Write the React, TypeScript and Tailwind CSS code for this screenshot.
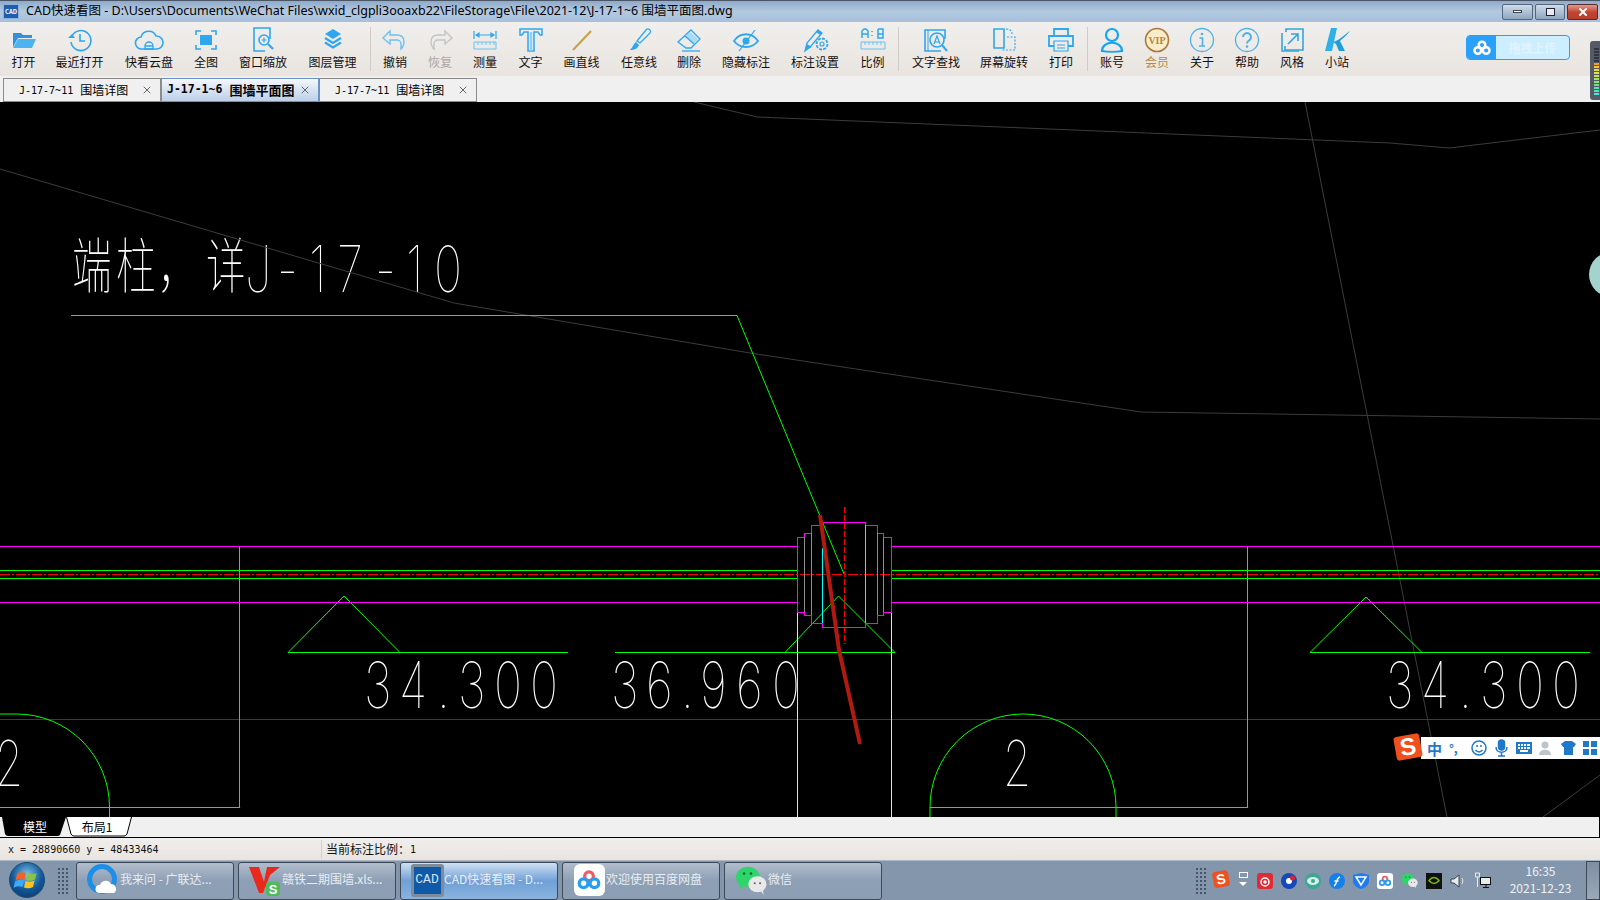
import type { ReactNode } from 'react';
import { X } from 'lucide-react';

const B = '#2ea7ee';
const UI = 'font-["Noto_Sans_CJK_SC","Noto_Sans",sans-serif]';

const Ico = ({ children }: { children: ReactNode }) => (
  <svg width="30" height="30" viewBox="0 0 30 30" fill="none" stroke={B} strokeWidth="1.6">{children}</svg>
);

const icons: Record<string, ReactNode> = {
  open: <Ico><path d="M4 8h8l2 2h9v3H9l-5 9z" fill="#2f93dd" stroke="none" /><path d="M9 14h18l-4 9H4z" fill="#4db3f0" stroke="none" /></Ico>,
  recent: <Ico><path d="M7 11a10 10 0 1 1 -1 6" /><path d="M3 13l4 -4 3 4z" fill={B} stroke="none" /><path d="M15 9v7h5" /></Ico>,
  cloud: <Ico><path d="M8 24a6 6 0 0 1 -1 -12 8 8 0 0 1 15 -1 6.500 6.500 0 0 1 1 13z" /><path d="M11 24v-3a4 4 0 0 1 8 0v3zM11 21h8" strokeWidth="1.300" /></Ico>,
  full: <Ico><path d="M5 10V6h5M20 6h5v4M25 20v4h-5M10 24H5v-4" /><rect x="9" y="10" width="12" height="10" fill={B} stroke="none" /></Ico>,
  wzoom: <Ico><path d="M17 26H6V3h16v11" /><circle cx="16" cy="15" r="5" /><path d="M13.500 15h5M16 12.500v5" strokeWidth="1.200" /><path d="M20 19l5 5" strokeWidth="2.200" /></Ico>,
  layers: <Ico><path d="M15 4l8 5 -8 5 -8 -5z" fill={B} stroke="none" /><path d="M7 13l8 5 8 -5M7 17.500l8 5 8 -5" strokeWidth="2.200" /></Ico>,
  undo: <Ico><path d="M10 6l-7 7 7 6v-4h7a4 4 0 0 1 4 4v5c4 -4 5 -14 -4 -14h-7z" strokeWidth="1.400" stroke="#6cc0f2" /></Ico>,
  redo: <Ico><path d="M20 6l7 7 -7 6v-4h-7a4 4 0 0 0 -4 4v5c-4 -4 -5 -14 4 -14h7z" strokeWidth="1.400" stroke="#c4c4c4" /></Ico>,
  measure: <Ico><path d="M4 6v8M26 6v8M6 10h18M6 10l3 -2v4zM24 10l-3 -2v4z" strokeWidth="1.200" /><path d="M4 17h22v7H4zM8 17v3M12 17v3M16 17v3M20 17v3M24 17v3" strokeWidth="1" stroke="#6cc0f2" /></Ico>,
  text: <Ico><path d="M4 4h22v6h-2l-2 -3h-4v19h-6V7H8l-2 3H4z" strokeWidth="1.500" /><path d="M15 7v19" strokeWidth="2.500" stroke="#8fd0f5" /></Ico>,
  line: <Ico><path d="M6 25L24 6" stroke="#c9a24f" strokeWidth="2.200" /></Ico>,
  brush: <Ico><path d="M13 16l9 -11a2.500 2.500 0 0 1 4 3l-10 10z" strokeWidth="1.300" /><path d="M12 17c-2 1 -3 5 -6 8 5 0 8 -2 9 -5z" fill={B} stroke="none" /></Ico>,
  eraser: <Ico><path d="M4 17L17 5l9 9 -9 9h-5z" strokeWidth="1.300" /><path d="M16 7l8 7 -4 5 -9 -8z" fill="#a9dbf7" stroke="none" /><path d="M11 11l9 8" strokeWidth="1.300" /><path d="M8 26h18" strokeWidth="1.300" /></Ico>,
  eye: <Ico><path d="M3 16c6 -9 18 -9 24 0 -6 8 -18 8 -24 0z" strokeWidth="1.800" /><circle cx="15" cy="16" r="3.500" fill={B} stroke="none" /><path d="M8 26L24 5" strokeWidth="1.200" /></Ico>,
  pen: <Ico><path d="M5 26l2 -8L18 5l4 3 -11 13z" fill="none" strokeWidth="1.300" /><path d="M18 5l4 3 -2 2 -4 -3z" fill={B} stroke="none" /><path d="M5 26l2 -7 5 3z" fill={B} stroke="none" /><circle cx="22" cy="19" r="5.500" strokeDasharray="3 1.200" strokeWidth="1.800" /><circle cx="22" cy="19" r="2" strokeWidth="1.200" /></Ico>,
  ratio: <Ico><path d="M4 13V6l2 -2h2l2 2v7M4 9h6M20 4v9h5V9h-5M20 4h5v5" strokeWidth="1.500" /><path d="M14 6v1M14 10v1" /><path d="M3 17h24v7H3zM7 17v3M11 17v3M15 17v3M19 17v3M23 17v3" strokeWidth="1" stroke="#6cc0f2" /></Ico>,
  find: <Ico><path d="M20 26H4V5h20v9" /><path d="M7 5v21" strokeWidth="1" /><circle cx="16" cy="15" r="7" /><path d="M13 19l3 -8 3 8M14 17h4" strokeWidth="1.200" /><path d="M21 20l5 6" strokeWidth="2" /></Ico>,
  rotate: <Ico><path d="M5 4h10v19H5z" /><path d="M18 12h8v13H12" strokeDasharray="2 1.500" strokeWidth="1.200" /><path d="M17 4c4 0 6 2 6 5" strokeDasharray="2 1.500" strokeWidth="1.200" /></Ico>,
  print: <Ico><path d="M8 11V4h14v7M8 21H3V11h24v10h-5" strokeWidth="1.800" /><path d="M8 16h14v10H8zM11 20h8M11 23h8" strokeWidth="1.200" /></Ico>,
  user: <Ico><circle cx="15" cy="10" r="6" stroke="#14a5f2" strokeWidth="2.200" /><path d="M5 26c0 -11 20 -11 20 0 -5 1 -15 1 -20 0z" stroke="#14a5f2" strokeWidth="2.200" /></Ico>,
  vip: (
    <svg width="30" height="30" viewBox="0 0 30 30">
      <circle cx="15" cy="15" r="11.500" fill="#f8eccb" stroke="#a9783a" strokeWidth="1.600" />
      <text x="15" y="18.500" textAnchor="middle" fontSize="10" fontWeight="700" fill="#b7872e" fontFamily="Liberation Serif, serif">VIP</text>
    </svg>
  ),
  info: (
    <svg width="30" height="30" viewBox="0 0 30 30" fill="none" stroke="#4fb2e6" strokeWidth="1.300">
      <circle cx="15" cy="15" r="11.500" />
      <circle cx="15" cy="9" r="1.300" fill="#4fb2e6" stroke="none" />
      <path d="M12.500 13h3v8M12 21h6" strokeWidth="1.600" />
    </svg>
  ),
  help: (
    <svg width="30" height="30" viewBox="0 0 30 30" fill="none" stroke="#4fb2e6" strokeWidth="1.300">
      <circle cx="15" cy="15" r="11.500" />
      <path d="M11 12a4 4 0 1 1 6 3.500c-1.500 1 -2 1.500 -2 3" strokeWidth="2" />
      <circle cx="15" cy="21.500" r="1.300" fill="#4fb2e6" stroke="none" />
    </svg>
  ),
  style: <Ico><path d="M9 7V4h17v21H8v-4" stroke="#36a5dc" /><path d="M5 8v18h17" stroke="#36a5dc" /><path d="M11 19L21 9M14 9h7v7" stroke="#36a5dc" /></Ico>,
  site: (
    <svg width="30" height="30" viewBox="0 0 30 30">
      <path d="M9 3h6L10 26H3z" fill="#2fb0e8" />
      <path d="M11 17c5 -1 10 -6 17 -11 -4 5 -8 8 -10 10l5 10h-6l-3 -7z" fill="#1e9fd8" />
    </svg>
  ),
};

const tools = [
  { label: '打开', icon: 'open', w: 'w-[45px] ml-px' },
  { label: '最近打开', icon: 'recent', w: 'w-[67px]' },
  { label: '快看云盘', icon: 'cloud', w: 'w-[72px]' },
  { label: '全图', icon: 'full', w: 'w-[42px]' },
  { label: '窗口缩放', icon: 'wzoom', w: 'w-[72px]' },
  { label: '图层管理', icon: 'layers', w: 'w-[67px]' },
  { sep: true, w: 'ml-[4px]' },
  { label: '撤销', icon: 'undo', w: 'w-[48px]' },
  { label: '恢复', icon: 'redo', w: 'w-[42px]', cls: 'text-[#a8a8a8]' },
  { label: '测量', icon: 'measure', w: 'w-[48px]' },
  { label: '文字', icon: 'text', w: 'w-[43px]' },
  { label: '画直线', icon: 'line', w: 'w-[59px]' },
  { label: '任意线', icon: 'brush', w: 'w-[56px]' },
  { label: '删除', icon: 'eraser', w: 'w-[44px]' },
  { label: '隐藏标注', icon: 'eye', w: 'w-[70px]' },
  { label: '标注设置', icon: 'pen', w: 'w-[68px]' },
  { label: '比例', icon: 'ratio', w: 'w-[47px]' },
  { sep: true, w: 'ml-[2px]' },
  { label: '文字查找', icon: 'find', w: 'w-[74px]' },
  { label: '屏幕旋转', icon: 'rotate', w: 'w-[62px]' },
  { label: '打印', icon: 'print', w: 'w-[52px]' },
  { sep: true, w: '' },
  { label: '账号', icon: 'user', w: 'w-[48px]' },
  { label: '会员', icon: 'vip', w: 'w-[42px]', cls: 'text-[#c08a35]' },
  { label: '关于', icon: 'info', w: 'w-[48px]' },
  { label: '帮助', icon: 'help', w: 'w-[42px]' },
  { label: '风格', icon: 'style', w: 'w-[48px]' },
  { label: '小站', icon: 'site', w: 'w-[42px]' },
];

const docTabs = [
  { name: 'J-17-7~11', title: '围墙详图' },
  { name: 'J-17-1~6', title: '围墙平面图', active: true },
  { name: 'J-17-7~11', title: '围墙详图' },
];

const BaiduMark = ({ s = 24, c1 = '#fff', c2 = '#fff', c3 = '#fff' }: { s?: number; c1?: string; c2?: string; c3?: string }) => (
  <svg width={s} height={s} viewBox="0 0 24 24" fill="none" strokeWidth="3">
    <circle cx="12" cy="8.500" r="4" stroke={c1} />
    <circle cx="7" cy="15" r="4" stroke={c2} />
    <circle cx="17" cy="15" r="4" stroke={c3} />
  </svg>
);

const WeChat = ({ s = 30 }: { s?: number }) => (
  <svg width={s} height={s} viewBox="0 0 30 30">
    <ellipse cx="12" cy="12" rx="11" ry="9.500" fill="#2fd46a" />
    <path d="M5 18l-1 6 6 -4z" fill="#2fd46a" />
    <circle cx="8.500" cy="9" r="1.200" fill="#14673a" />
    <circle cx="15" cy="9" r="1.200" fill="#14673a" />
    <ellipse cx="21" cy="19" rx="8.500" ry="7.500" fill="#e9e9e9" />
    <path d="M24 25l3 4 -1 -5z" fill="#e9e9e9" />
    <circle cx="18.500" cy="18" r="1" fill="#666" />
    <circle cx="23.500" cy="18" r="1" fill="#666" />
  </svg>
);

const taskItems: { label: string; active?: boolean; icon: ReactNode }[] = [
  {
    label: '我来问 - 广联达...',
    icon: (
      <svg width="34" height="34" viewBox="0 0 34 34" fill="none">
        <circle cx="16" cy="16" r="12.500" stroke="#1d8fe8" strokeWidth="5" />
        <path d="M13 30a4 4 0 0 1 1 -8 6 6 0 0 1 11 -1 5 5 0 0 1 3 9z" fill="#fff" />
      </svg>
    ),
  },
  {
    label: '赣铁二期围墙.xls...',
    icon: (
      <svg width="34" height="34" viewBox="0 0 34 34">
        <path d="M1 4h10l5 15 3 -15h13l-10 8 -7 18h-4z" fill="#e8291c" />
        <rect x="18" y="19" width="14" height="14" rx="3" fill="#4dbb5f" />
        <text x="25" y="31" textAnchor="middle" fontSize="13" fontWeight="700" fill="#fff" fontFamily="Liberation Sans, sans-serif">S</text>
      </svg>
    ),
  },
  {
    label: 'CAD快速看图 - D...',
    active: true,
    icon: (
      <div className="w-[33px] h-[33px] bg-[#0f5aa8] border-[3px] border-[#7d8c9c] rounded-[3px] flex items-center justify-center text-[13px] font-['Liberation_Mono',monospace] text-[#cfe3f7]">CAD</div>
    ),
  },
  {
    label: '欢迎使用百度网盘',
    icon: (
      <div className="w-[31px] h-[32px] bg-white rounded-[6px] flex items-center justify-center">
        <BaiduMark s={26} c1="#ef5a68" c2="#2a9cf0" c3="#2a9cf0" />
      </div>
    ),
  },
  { label: '微信', icon: <WeChat s={32} /> },
];

const Grip = () => (
  <div className="grid grid-cols-3 gap-[2px] w-[10px]">
    {Array.from({ length: 21 }).map((_, i) => (
      <span key={i} className="w-[2px] h-[2px] bg-[#46566a]" />
    ))}
  </div>
);

const tray: ReactNode[] = [
  <div key="a" className="w-[16px] h-[16px] rounded-[3px] bg-[#e02b35] flex items-center justify-center"><svg width="12" height="12" viewBox="0 0 12 12" fill="none" stroke="#fff" strokeWidth="1.500"><circle cx="6" cy="7" r="4" /><circle cx="6" cy="7" r="1" /></svg></div>,
  <svg key="b" width="16" height="16" viewBox="0 0 16 16"><circle cx="8" cy="8" r="8" fill="#1548b8" /><circle cx="8" cy="8" r="3" fill="#fff" /><circle cx="11.500" cy="5" r="2.500" fill="#e4222c" /></svg>,
  <svg key="c" width="16" height="16" viewBox="0 0 16 16"><circle cx="8" cy="8" r="8" fill="#3aa892" /><ellipse cx="8" cy="8" rx="6" ry="4" fill="#d6efe9" /><circle cx="8" cy="8" r="2" fill="#3aa892" /></svg>,
  <svg key="d" width="16" height="16" viewBox="0 0 16 16"><circle cx="8" cy="8" r="8" fill="#1680ea" /><path d="M5 13c3 -1 2 -8 6 -9M5.500 8h4" stroke="#fff" strokeWidth="1.500" fill="none" /></svg>,
  <svg key="e" width="16" height="16" viewBox="0 0 16 16"><path d="M8 0l8 2v6c0 4 -4 7 -8 8 -4 -1 -8 -4 -8 -8V2z" fill="#1c7cf0" /><path d="M3 4h10l-5 8z" fill="none" stroke="#fff" strokeWidth="1.500" /></svg>,
  <div key="f" className="w-[16px] h-[16px] bg-white rounded-[3px] flex items-center justify-center"><BaiduMark s={14} c1="#ef5a68" c2="#2a9cf0" c3="#2a9cf0" /></div>,
  <WeChat key="g" s={17} />,
  <div key="h" className="w-[16px] h-[16px] bg-[#111] flex items-center justify-center"><svg width="12" height="9" viewBox="0 0 12 9" fill="none" stroke="#7cb518" strokeWidth="1.500"><path d="M1 4.500c3 -4 7 -4 10 0 -3 4 -7 4 -10 0z" /></svg></div>,
  <svg key="i" width="16" height="16" viewBox="0 0 16 16" fill="none"><path d="M1 6h3l5 -4v12l-5 -4H1z" fill="#e8ecef" stroke="#39434f" /><path d="M12 5c1 2 1 4 0 6" stroke="#e8ecef" /></svg>,
  <svg key="j" width="17" height="17" viewBox="0 0 17 17" fill="none" stroke="#111"><rect x="6.500" y="5.500" width="10" height="7" fill="#e8ecef" /><path d="M9 15.500h6M12 12.500v3" /><path d="M1.500 1h4v4h-4zM3.500 5v10" stroke="#e8ecef" /></svg>,
];

const magenta = 'M822.300 522.300H865.700V525.300H877.300V533.300H883.300V537.300H891.300V612.300H883.300V615.300H877.300V623.300H865.700V627.300H822.300V623.300H811.700V615.300H804.300V612.300H797.300V537.300H804.300V533.300H811.700V525.300H822.300Z';

// CAD letters are narrow and widely spaced: real text, each glyph placed with an x list under a horizontal squeeze
const CadText = ({ xs, y, sx, size, children }: { xs: number[]; y: number; sx: number; size: number; children: string }) => (
  <text transform={`scale(${sx} 1)`} x={xs.map((x) => x / sx).join(' ')} y={y} fontSize={size} fontWeight={100} fill="#fff" fontFamily="Inter, Noto Sans CJK SC, sans-serif">
    {children}
  </text>
);

const num34 = [364, 399, 437, 458, 494, 530];

const CadCanvas = () => (
  <svg className="block w-[1600px] h-[715px] bg-black" viewBox="0 102 1600 715" fill="none" shapeRendering="crispEdges">
    <CadText xs={[72, 116, 158, 206]} y={288} sx={0.66} size={60}>端柱，详</CadText>
    <CadText xs={[245, 277, 309, 337, 375, 406, 434]} y={292} sx={0.74} size={64}>J-17-10</CadText>
    <CadText xs={num34} y={708.5} sx={0.74} size={64}>34.300</CadText>
    <CadText xs={[611, 646, 681, 700, 736, 772]} y={708.5} sx={0.74} size={64}>36.960</CadText>
    <CadText xs={num34.map((x) => x + 1022)} y={708.5} sx={0.74} size={64}>34.300</CadText>
    <CadText xs={[1003]} y={786} sx={0.72} size={63}>2</CadText>
    <CadText xs={[-5]} y={786} sx={0.72} size={63}>2</CadText>

    <g stroke="#3c3c3c" shapeRendering="auto">
      <path d="M694 102L757 117L1390 143L1449 148L1600 130" />
      <path d="M0 169L454 303L750 353L1141 412L1600 419" />
      <path d="M1305 102L1447 817" />
      <path d="M1543 817L1600 775" />
      <path d="M0 719.500H1600" />
    </g>

    <g stroke="#00ff00" strokeWidth="1">
      <path d="M71 315.500H737" />
      <path d="M737 315.500L844 574" shapeRendering="auto" />
      <path d="M0 570.500H797M891 570.500H1600M0 578.500H797M891 578.500H1600" />
      <path d="M288 652.500L344 596L400 652.500M288 652.500H568" shapeRendering="auto" />
      <path d="M615 652.500H895M785 652.500L838.500 596L895 652.500" shapeRendering="auto" />
      <path d="M1310 652.500L1366 597L1422 652.500M1310 652.500H1590" shapeRendering="auto" />
      <path d="M239.500 547V807.500H0M1247.500 547V807.500H930" />
      <path d="M930 817V807A93 93 0 0 1 1116 807V817" shapeRendering="auto" />
      <path d="M109.500 817V807A93 93 0 0 0 16 714H0" shapeRendering="auto" />
    </g>

    <path d="M0 546.500H797M891 546.500H1600M0 602.500H797M891 602.500H1600" stroke="#ff00ff" />
    <path d="M0 574.500H1600" stroke="#ff0000" strokeDasharray="10 2 2 2" />
    <path d="M844.500 507V644" stroke="#ff0000" strokeDasharray="6 2" />
    <path d="M797.500 571V817M891.500 571V817" stroke="#ffff00" />
    <path d={magenta} stroke="#ff00ff" />
    <path d="M804.500 537V612M811.500 533V615M877.500 533V615M883.500 537V612" stroke="#8c8c8c" />
    <path d="M822.500 548V623M865.500 525V623" stroke="#00ffff" />
    <path d="M820 515L839 650L860 744" stroke="#b01a10" strokeWidth="4" shapeRendering="auto" />
  </svg>
);

const meter = ['#2f3540', '#2f3540', '#2f3540', '#2f3540', '#2f3540', '#f0a020', '#f0c830', '#e8d840', '#e0e050', '#c8e060', '#a8e070', '#90e080', '#70e090', '#60e0a8', '#50e0c0', '#50e0d0'];

export default function App() {
  return (
    <div className={`relative w-[1600px] h-[900px] overflow-hidden flex flex-col bg-black ${UI}`}>
      {/* Title bar */}
      <div className="h-[22px] border-t border-[#4a5566] bg-gradient-to-b from-[#8eaaca] via-[#b3c9e1] to-[#a6bfdc] flex items-center pl-[3px] text-[12.5px] text-black">
        <div className="w-[16px] h-[15px] bg-[#1d5fae] border border-[#8fb2d8] text-[6px] leading-[13px] text-center text-white font-bold mr-[7px]">CAD</div>
        <span className="flex-1 whitespace-nowrap font-['Noto_Sans','Noto_Sans_CJK_SC',sans-serif]">CAD快速看图 - D:\Users\Documents\WeChat Files\wxid_clgpli3ooaxb22\FileStorage\File\2021-12\J-17-1~6 围墙平面图.dwg</span>
        <div className="flex gap-[2px] mr-[2px] h-[16px]">
          <div className="w-[31px] rounded-[2px] border border-[#56657a] bg-gradient-to-b from-[#cfdcea] to-[#8fa6c0] flex items-center justify-center"><span className="w-[9px] h-[3px] bg-white border border-[#445]" /></div>
          <div className="w-[30px] rounded-[2px] border border-[#56657a] bg-gradient-to-b from-[#cfdcea] to-[#8fa6c0] flex items-center justify-center"><span className="w-[9px] h-[8px] bg-white/70 border border-[#223]" /></div>
          <div className="w-[31px] rounded-[2px] border border-[#5a2a2a] bg-gradient-to-b from-[#dd9a90] via-[#c4452f] to-[#b5402c] flex items-center justify-center"><X size={12} strokeWidth={4} color="#fff" /></div>
        </div>
      </div>

      {/* Toolbar */}
      <div className="h-[54px] bg-gradient-to-b from-[#f0efed] to-[#e9e4df] flex items-start text-[12px] leading-[14px] text-[#111]">
        {tools.map((t, i) =>
          t.sep ? (
            <div key={i} className={`w-px h-[44px] mt-[5px] bg-[#cfccc8] ${t.w}`} />
          ) : (
            <div key={i} className={`flex flex-col items-center pt-[3px] ${t.w} ${t.cls ?? ''}`}>
              {icons[t.icon as string]}
              <span className="h-[14px] whitespace-nowrap">{t.label}</span>
            </div>
          ),
        )}
        <div className="ml-auto mr-[30px] mt-[13px] w-[104px] h-[25px] rounded-[4px] border border-[#2aa0f8] bg-[#cdeeff] flex overflow-hidden">
          <div className="w-[29px] bg-[#2aa0f8] flex items-center justify-center"><BaiduMark s={20} /></div>
          <span className="flex-1 text-center text-[12px] leading-[23px] font-bold text-[#dff4ff]">拖拽上传</span>
        </div>
      </div>

      {/* Document tabs */}
      <div className="h-[26px] bg-[#f0f0f0] flex items-end pl-[3px]">
        {docTabs.map((t, i) => (
          <div key={i} className={`w-[158px] h-[24px] border flex items-center ${t.active ? 'border-[#6b93c5] bg-gradient-to-b from-[#f4f7fb] to-[#bcd0e8] font-bold pl-[5px]' : 'border-[#8a8a8a] bg-[#f0f0f0] pl-[15px]'}`}>
            <span className={`font-['DejaVu_Sans_Mono',monospace] whitespace-nowrap ${t.active ? 'text-[11.5px]' : 'text-[10px]'}`}>{t.name}</span>
            <span className={`ml-[7px] whitespace-nowrap ${t.active ? 'text-[13px]' : 'text-[12px]'}`}>{t.title}</span>
            <X size={12} className="ml-auto mr-[7px] text-[#666]" />
          </div>
        ))}
      </div>

      <CadCanvas />

      {/* Model / layout tabs */}
      <div className="h-[21px] bg-[#f0f0f0] border-b border-black border-r flex text-[12px] leading-[19px]">
        <div className="relative w-[66px] text-white text-center">
          <svg className="absolute inset-0" width="66" height="20" viewBox="0 0 66 20"><path d="M2 0H66L60 18Q59 19 57 19H8Q6 19 5 17z" fill="#000" /></svg>
          <span className="relative pl-[4px]">模型</span>
        </div>
        <div className="relative w-[66px] text-center">
          <svg className="absolute inset-0" width="66" height="20" viewBox="0 0 66 20" fill="#fff" stroke="#000"><path d="M0.500 0L5 17Q6 19 8 19H58Q60 19 61 17L65.500 0" /></svg>
          <span className="relative pr-[4px]">布局1</span>
        </div>
      </div>

      {/* Status bar */}
      <div className="h-[22px] bg-gradient-to-b from-[#f0efed] to-[#e9e4df] flex items-center">
        <span className="w-[321px] pl-[8px] text-[10px] font-['DejaVu_Sans_Mono',monospace] text-[#111] whitespace-nowrap">x = 28890660 y = 48433464</span>
        <div className="h-[18px] border-l border-[#d2cfcb] pl-[4px] flex items-center text-[12px] text-[#111]">
          当前标注比例：<span className="text-[10px] font-['DejaVu_Sans_Mono',monospace]">1</span>
        </div>
      </div>

      {/* Taskbar */}
      <div className="flex-1 border-t border-[#aab8c8] bg-[#8496ac] flex items-center">
        <div className="w-[54px] flex justify-center -mt-[2px]">
          <svg width="38" height="38" viewBox="0 0 38 38">
            <defs>
              <radialGradient id="orb" cx="50%" cy="35%" r="70%">
                <stop offset="0" stopColor="#7fc4ea" />
                <stop offset="0.6" stopColor="#14589a" />
                <stop offset="1" stopColor="#0c3a70" />
              </radialGradient>
            </defs>
            <circle cx="19" cy="19" r="17.500" fill="url(#orb)" stroke="#18506f" />
            <path d="M9 13c3 -2 6 -2 9 -1l-1.500 6.500c-3 -1 -6 -1 -9 1z" fill="#f0642a" />
            <path d="M19.500 12.500c3 1 6 1 9 -.5l-1.500 6.500c-3 1.500 -6 1.500 -9 .5z" fill="#8cc63f" />
            <path d="M7 20.500c3 -2 6 -2 9 -1l-1.500 6.500c-3 -1 -6 -1 -9 1z" fill="#3fa9f5" />
            <path d="M17.500 20c3 1 6 1 9 -.5l-1.500 6.500c-3 1.500 -6 1.500 -9 .5z" fill="#fcc31e" />
          </svg>
        </div>
        <div className="ml-[4px]"><Grip /></div>
        <div className="ml-[8px] flex gap-[4px] text-[12px] text-[#e8edf2]">
          {taskItems.map((t) => (
            <div
              key={t.label}
              className={`w-[158px] h-[38px] rounded-[3px] border border-[#3e4958] flex items-center pl-[8px] whitespace-nowrap ${t.active ? 'bg-gradient-to-b from-[#cfe0f2] via-[#6fa0d6] to-[#8ab3de]' : 'bg-gradient-to-b from-[#b1bdcb] via-[#8d9fb5] to-[#8d9fb5]'}`}
            >
              <div className="w-[36px] flex justify-center shrink-0 -mt-[1px]">{t.icon}</div>
              <span className="-ml-[1px] overflow-hidden pb-[3px]">{t.label}</span>
            </div>
          ))}
        </div>

        <div className="ml-auto flex items-center">
          <Grip />
          <div className="ml-[7px] w-[16px] h-[16px] rotate-[-10deg] rounded-[3px] bg-[#f0501e] text-white text-[14px] leading-[16px] font-bold text-center font-['Liberation_Sans',sans-serif] -mt-[4px]">S</div>
          <div className="ml-[7px] w-[14px] flex flex-col items-center gap-[4px] -mt-[4px]">
            <span className="w-[9px] h-[6px] border border-white" />
            <span className="w-0 h-0 border-x-[4px] border-x-transparent border-t-[4px] border-t-white" />
          </div>
          <div className="flex items-center gap-[8px] ml-[7px]">{tray}</div>
          <div className="w-[91px] ml-[4px] text-center text-[12px] leading-[17px] text-[#eef2f6] -mt-[3px]">
            <div>16:35</div>
            <div>2021-12-23</div>
          </div>
          <div className="w-[14px] h-[39px] border border-[#3e4958] bg-gradient-to-b from-[#7f8fa2] to-[#9aa8b8]" />
        </div>
      </div>

      {/* Floating: input method bar */}
      <div className="absolute left-[1421px] top-[737px] w-[179px] h-[22px] bg-white flex items-center pl-[6px] gap-[7px] text-[#1f78c8]">
        <span className="w-[15px] text-[15px] leading-none font-bold">中</span>
        <span className="w-[15px] text-[12px] leading-none font-bold">°,</span>
        <svg width="16" height="16" viewBox="0 0 16 16" fill="none" stroke="#1f78c8" strokeWidth="1.500"><circle cx="8" cy="8" r="7" /><path d="M6 5v2M10 5v2M4.500 10c2 2.500 5 2.500 7 0" /></svg>
        <svg width="15" height="18" viewBox="0 0 15 18" fill="none" stroke="#1f78c8" strokeWidth="1.500"><rect x="4.500" y="1" width="6" height="10" rx="3" fill="#1f78c8" /><path d="M2 8c0 7 11 7 11 0M7.500 13v4M4 17h7" /></svg>
        <svg width="16" height="12" viewBox="0 0 16 12" fill="#1f78c8"><path d="M0 0h16v12H0zM2 2v2h2V2zm3 0v2h2V2zm3 0v2h2V2zm3 0v2h3V2zM2 5v2h2V5zm3 0v2h2V5zm3 0v2h2V5zm3 0v2h3V5zM4 8v2h8V8z" fillRule="evenodd" /></svg>
        <svg width="15" height="15" viewBox="0 0 15 15" fill="#bcc4cc"><circle cx="6" cy="4" r="3.500" /><path d="M0 14c0 -7 12 -7 12 0z" /></svg>
        <svg width="15" height="14" viewBox="0 0 15 14" fill="#1f78c8"><path d="M4 0h7l4 3 -2 3h-1v8H3V6H2L0 3z" /></svg>
        <svg width="14" height="14" viewBox="0 0 14 14" fill="#1f78c8"><path d="M0 0h6v6H0zM8 0h6v6H8zM0 8h6v6H0zM8 8h6v6H8z" /></svg>
      </div>
      <div className="absolute left-[1395px] top-[735px] w-[26px] h-[24px] rotate-[-10deg] rounded-[3px] bg-[#f0501e] text-white text-[24px] leading-[24px] font-bold text-center font-['Liberation_Sans',sans-serif]">S</div>

      {/* Floating: side handles */}
      <div className="absolute left-[1589px] top-[252px] w-[24px] h-[45px] rounded-l-full bg-[#a4d2cc]" />
      <div className="absolute left-[1590px] top-[41px] w-[10px] h-[59px] rounded-l-[3px] bg-[#555b66] flex flex-col gap-px items-center pt-[7px] pl-[2px]">
        {meter.map((c, i) => (
          <span key={i} className="w-[5px] h-[2px]" style={{ background: c }} />
        ))}
      </div>
    </div>
  );
}
